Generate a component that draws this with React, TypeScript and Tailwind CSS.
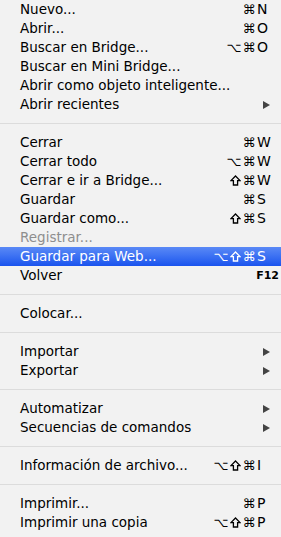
import React from "react";

type Item =
  | { sep: true }
  | {
      sep?: false;
      label: string;
      mods?: string;
      key?: string;
      sub?: boolean;
      disabled?: boolean;
      active?: boolean;
      fkey?: string;
    };

const items: Item[] = [
  { label: "Nuevo...", mods: "⌘", key: "N" },
  { label: "Abrir...", mods: "⌘", key: "O" },
  { label: "Buscar en Bridge...", mods: "⌥⌘", key: "O" },
  { label: "Buscar en Mini Bridge..." },
  { label: "Abrir como objeto inteligente..." },
  { label: "Abrir recientes", sub: true },
  { sep: true },
  { label: "Cerrar", mods: "⌘", key: "W" },
  { label: "Cerrar todo", mods: "⌥⌘", key: "W" },
  { label: "Cerrar e ir a Bridge...", mods: "⇧⌘", key: "W" },
  { label: "Guardar", mods: "⌘", key: "S" },
  { label: "Guardar como...", mods: "⇧⌘", key: "S" },
  { label: "Registrar...", disabled: true },
  { label: "Guardar para Web...", mods: "⌥⇧⌘", key: "S", active: true },
  { label: "Volver", fkey: "F12" },
  { sep: true },
  { label: "Colocar..." },
  { sep: true },
  { label: "Importar", sub: true },
  { label: "Exportar", sub: true },
  { sep: true },
  { label: "Automatizar", sub: true },
  { label: "Secuencias de comandos", sub: true },
  { sep: true },
  { label: "Información de archivo...", mods: "⌥⇧⌘", key: "I" },
  { sep: true },
  { label: "Imprimir...", mods: "⌘", key: "P" },
  { label: "Imprimir una copia", mods: "⌥⇧⌘", key: "P" },
];

function Shift({ color }: { color: string }) {
  return (
    <svg width="11" height="11" viewBox="0 0 11 11" className="mx-[1px]">
      <path
        d="M5.5 1 L10 5.6 L7.6 5.6 L7.6 10 L3.4 10 L3.4 5.6 L1 5.6 Z"
        fill="none"
        stroke={color}
        strokeWidth="1.3"
        strokeLinejoin="miter"
      />
    </svg>
  );
}

function Mods({ mods, color }: { mods: string; color: string }) {
  return (
    <span className="flex items-center text-[13px]">
      {Array.from(mods).map((m, i) =>
        m === "⇧" ? (
          <Shift key={i} color={color} />
        ) : (
          <span key={i} className="mx-[0.5px]">
            {m}
          </span>
        )
      )}
    </span>
  );
}

export default function App() {
  return (
    <div
      className="w-[281px] h-[537px] bg-[#f2f2f2] overflow-hidden"
      style={{ fontFamily: '"DejaVu Sans", "Liberation Sans", sans-serif' }}
    >
      {items.map((it, i) => {
        if (it.sep) {
          return (
            <div key={i} className="h-[19px] flex items-center">
              <div className="h-px w-full bg-[#dcdcdc]" />
            </div>
          );
        }
        const color = it.active
          ? "text-white"
          : it.disabled
          ? "text-[#8e8e8e]"
          : "text-black";
        return (
          <div
            key={i}
            className={`h-[19px] flex items-center pl-[20px] text-[13.5px] leading-[19px] ${color} ${
              it.active ? "bg-linear-to-b from-[#5a89f6] to-[#1a53ee]" : ""
            } ${it.fkey ? "pr-[2px]" : "pr-[11px]"}`}
          >
            <span className="flex-1 whitespace-nowrap">{it.label}</span>
            {it.key && (
              <span className="flex items-center">
                <Mods mods={it.mods || ""} color={it.active ? "#ffffff" : "#000000"} />
                <span className="w-[13px] ml-[1px] text-[14px] text-left">{it.key}</span>
              </span>
            )}
            {it.fkey && <span className="text-[11px] font-bold">{it.fkey}</span>}
            {it.sub && (
              <svg width="7" height="8" viewBox="0 0 7 8">
                <path d="M0 0 L7 4 L0 8 Z" fill="#444" />
              </svg>
            )}
          </div>
        );
      })}
    </div>
  );
}
